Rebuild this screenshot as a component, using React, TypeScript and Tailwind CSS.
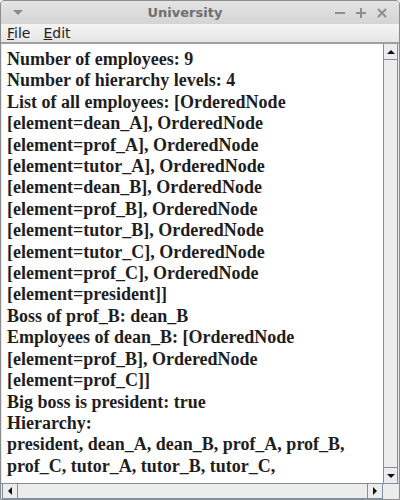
import React from "react";

const lines = [
  "Number of employees: 9",
  "Number of hierarchy levels: 4",
  "List of all employees: [OrderedNode",
  "[element=dean_A], OrderedNode",
  "[element=prof_A], OrderedNode",
  "[element=tutor_A], OrderedNode",
  "[element=dean_B], OrderedNode",
  "[element=prof_B], OrderedNode",
  "[element=tutor_B], OrderedNode",
  "[element=tutor_C], OrderedNode",
  "[element=prof_C], OrderedNode",
  "[element=president]]",
  "Boss of prof_B: dean_B",
  "Employees of dean_B: [OrderedNode",
  "[element=prof_B], OrderedNode",
  "[element=prof_C]]",
  "Big boss is president: true",
  "Hierarchy:",
  "president, dean_A, dean_B, prof_A, prof_B,",
  "prof_C, tutor_A, tutor_B, tutor_C,",
];

const App = () => {
  return (
    <div className="w-[400px] h-[500px] flex flex-col bg-[#e8e8e8] border border-[#8c8c8c] rounded-t-[4px] overflow-hidden font-['DejaVu_Sans',sans-serif]">
      {/* title bar */}
      <div className="h-[23px] flex items-center px-3 bg-gradient-to-b from-[#e4e4e4] to-[#d4d4d4]">
        <span className="w-0 h-0 border-l-[5px] border-r-[5px] border-t-[5px] border-l-transparent border-r-transparent border-t-[#8a8a8a]" />
        <span className="flex-1 text-center text-[13px] font-bold text-[#6e6e6e] ml-3">University</span>
        <div className="flex items-center gap-[11px] text-[#8e8e8e]">
          <svg width="10" height="10" viewBox="0 0 10 10"><rect x="0" y="4" width="10" height="2" fill="currentColor" /></svg>
          <svg width="10" height="10" viewBox="0 0 10 10"><rect x="0" y="4" width="10" height="2" fill="currentColor" /><rect x="4" y="0" width="2" height="10" fill="currentColor" /></svg>
          <svg width="10" height="10" viewBox="0 0 10 10"><path d="M1 1 L9 9 M9 1 L1 9" stroke="currentColor" strokeWidth="2" /></svg>
        </div>
      </div>

      {/* menu bar */}
      <div className="h-[20px] flex items-center gap-[13px] px-[6px] bg-gradient-to-b from-[#f4f4f4] to-[#e6e6e6] border-b-2 border-[#a0a0a0] text-[14px] text-[#222]">
        <span><span className="underline">F</span>ile</span>
        <span><span className="underline">E</span>dit</span>
      </div>

      {/* text area + vertical scrollbar */}
      <div className="flex-1 flex min-h-0 px-px">
        <div className="flex-1 bg-white pl-[5px] pt-[5px] font-['Liberation_Serif',serif] font-bold text-[18px] leading-[21.4px] text-[#1e1e1e] overflow-hidden whitespace-nowrap">
          {lines.map((l) => (
            <div key={l}>{l}</div>
          ))}
        </div>
        <div className="w-[15px] flex flex-col bg-[#ececec] border-l border-r border-[#7f8fa0]">
          <div className="h-[16px] flex items-center justify-center border-b border-[#7f8fa0]">
            <span className="w-0 h-0 border-l-[4px] border-r-[4px] border-b-[4px] border-l-transparent border-r-transparent border-b-[#111]" />
          </div>
          <div className="flex-1" />
          <div className="h-[16px] flex items-center justify-center border-t border-[#7f8fa0]">
            <span className="w-0 h-0 border-l-[4px] border-r-[4px] border-t-[4px] border-l-transparent border-r-transparent border-t-[#111]" />
          </div>
        </div>
      </div>

      {/* horizontal scrollbar */}
      <div className="h-[16px] flex px-px border-t border-[#7f8fa0]">
        <div className="flex-1 flex bg-[#ececec] border-b border-[#7f8fa0]">
          <div className="w-[16px] flex items-center justify-center border-r border-[#7f8fa0] border-l">
            <span className="w-0 h-0 border-t-[4px] border-b-[4px] border-r-[4px] border-t-transparent border-b-transparent border-r-[#111]" />
          </div>
          <div className="flex-1" />
          <div className="w-[16px] flex items-center justify-center border-l border-r border-[#7f8fa0]">
            <span className="w-0 h-0 border-t-[4px] border-b-[4px] border-l-[4px] border-t-transparent border-b-transparent border-l-[#111]" />
          </div>
        </div>
        <div className="w-[15px] bg-[#ececec]" />
      </div>
    </div>
  );
};

export default App;
